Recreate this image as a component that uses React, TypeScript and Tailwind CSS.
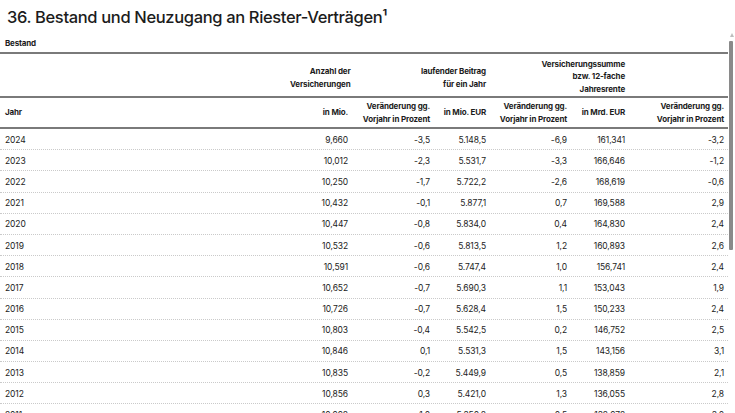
import React from "react";

const rows: string[][] = [
  ["2024", "9,660", "-3,5", "5.148,5", "-6,9", "161,341", "-3,2"],
  ["2023", "10,012", "-2,3", "5.531,7", "-3,3", "166,646", "-1,2"],
  ["2022", "10,250", "-1,7", "5.722,2", "-2,6", "168,619", "-0,6"],
  ["2021", "10,432", "-0,1", "5.877,1", "0,7", "169,588", "2,9"],
  ["2020", "10,447", "-0,8", "5.834,0", "0,4", "164,830", "2,4"],
  ["2019", "10,532", "-0,6", "5.813,5", "1,2", "160,893", "2,6"],
  ["2018", "10,591", "-0,6", "5.747,4", "1,0", "156,741", "2,4"],
  ["2017", "10,652", "-0,7", "5.690,3", "1,1", "153,043", "1,9"],
  ["2016", "10,726", "-0,7", "5.628,4", "1,5", "150,233", "2,4"],
  ["2015", "10,803", "-0,4", "5.542,5", "0,2", "146,752", "2,5"],
  ["2014", "10,846", "0,1", "5.531,3", "1,5", "143,156", "3,1"],
  ["2013", "10,835", "-0,2", "5.449,9", "0,5", "138,859", "2,1"],
  ["2012", "10,856", "0,3", "5.421,0", "1,3", "136,055", "2,8"],
  ["2011", "10,998", "1,0", "5.350,8", "0,5", "132,972", "3,0"],
];

const cols = "grid grid-cols-[290px_62px_82px_56px_81px_58px_99px]";

export default function App() {
  return (
    <div
      className="relative w-[735px] h-[413px] overflow-hidden bg-white text-[#1c1c1c]"
      style={{ fontFamily: "Inter, 'Liberation Sans', sans-serif" }}
    >
      <h1 className="h-[34px] pl-[7px] pt-[6px] text-[16.5px] font-medium leading-[22px] tracking-[-0.35px]">
        36. Bestand und Neuzugang an Riester-Verträgen¹
      </h1>
      <div className="w-[728px]">
        <div className="h-[18px] pl-[5px] text-[8px] font-bold leading-[18px] tracking-[-0.2px]">
          Bestand
        </div>
        <div className={`${cols} h-[46px] border-t-2 border-b-2 border-[#7a7a7a] text-[8px] font-bold leading-[12.5px] tracking-[-0.15px]`}>
          <div />
          <div className="flex items-end justify-end pr-[4px] pb-[6px] text-right whitespace-nowrap" style={{ direction: "rtl" }}>
            <span style={{ direction: "ltr" }}>
              Anzahl der
              <br />
              Versicherungen
            </span>
          </div>
          <div className="col-span-2 flex items-end justify-end pr-[4px] pb-[6px] text-right">
            <span>
              laufender Beitrag
              <br />
              für ein Jahr
            </span>
          </div>
          <div className="col-span-2 flex items-end justify-end pr-[4px] pb-[1px] text-right">
            <span>
              Versicherungssumme
              <br />
              bzw. 12-fache
              <br />
              Jahresrente
            </span>
          </div>
          <div />
        </div>
        <div className={`${cols} h-[31px] border-b-2 border-[#7a7a7a] items-center text-[8px] font-bold leading-[12.5px] tracking-[-0.15px]`}>
          <div className="pl-[5px]">Jahr</div>
          <div className="pr-[4px] text-right">in Mio.</div>
          <div className="pr-[4px] text-right">
            Veränderung gg.
            <br />
            Vorjahr in Prozent
          </div>
          <div className="pr-[4px] text-right">in Mio. EUR</div>
          <div className="pr-[4px] text-right">
            Veränderung gg.
            <br />
            Vorjahr in Prozent
          </div>
          <div className="pr-[4px] text-right">in Mrd. EUR</div>
          <div className="pr-[4px] text-right">
            Veränderung gg.
            <br />
            Vorjahr in Prozent
          </div>
        </div>
        {rows.map((r) => (
          <div
            key={r[0]}
            className={`${cols} h-[21.2px] items-center border-b border-dotted border-[#cacaca] pt-[1px] text-[8.5px] leading-[12px] tracking-[-0.1px]`}
          >
            <div className="pl-[5px]">{r[0]}</div>
            {r.slice(1).map((v, i) => (
              <div key={i} className="pr-[4px] text-right">
                {v}
              </div>
            ))}
          </div>
        ))}
      </div>
      {/* scrollbar overlay */}
      <div className="absolute left-[729px] top-[33px] w-[5px]">
        <div className="mx-auto h-0 w-0 border-x-[2.5px] border-b-[4px] border-x-transparent border-b-[#bdbdbd]" />
        <div className="mt-[4px] h-[209px] w-[4px] rounded-[1px] bg-[#8a8a8a]" />
      </div>
    </div>
  );
}
